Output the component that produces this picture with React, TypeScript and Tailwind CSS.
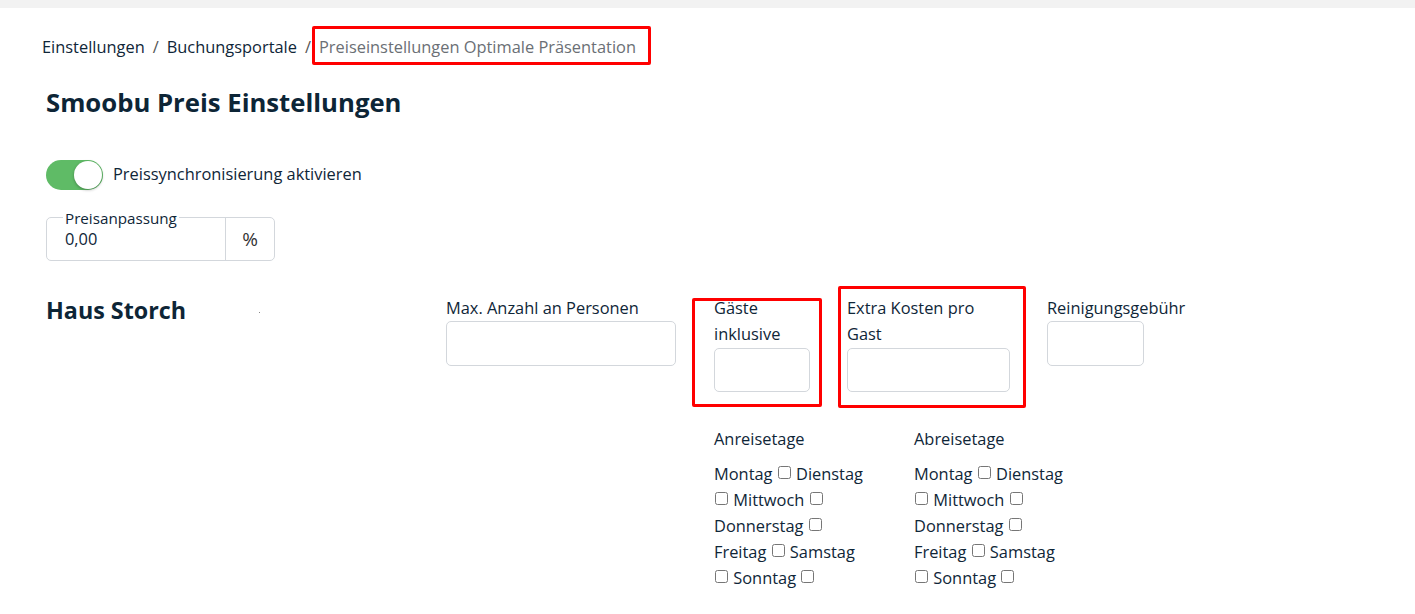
import React from "react";

const font = { fontFamily: "'Open Sans', Arial, sans-serif" };

function DayList() {
  const cb = <input type="checkbox" className="align-middle mx-[1px] relative -top-[3px]" />;
  return (
    <div className="w-[156px] text-[16.4px] leading-[26px]">
      Montag {cb} Dienstag {cb} Mittwoch {cb} Donnerstag {cb} Freitag {cb} Samstag {cb} Sonntag {cb}
    </div>
  );
}

export default function App() {
  return (
    <div className="min-h-[614px] bg-white text-[#0f2638]" style={font}>
      <div className="h-[8px] bg-[#f2f2f2]" />
      <div className="pl-[42px] pt-[27px] text-[16.4px] leading-[24px] flex items-center">
        <span>Einstellungen</span>
        <span className="mx-[8px] text-[#555]">/</span>
        <span>Buchungsportale</span>
        <span className="ml-[8px] mr-[8px] text-[#555]">/</span>
        <span className="relative text-[#6b6f75]">
          Preiseinstellungen Optimale Präsentation
          <span className="absolute -left-[7px] -right-[15px] -top-[9px] -bottom-[6px] border-[3px] border-[#ff0000] rounded-[2px]" />
        </span>
      </div>
      <h1 className="ml-[46px] mt-[28px] text-[25.7px] leading-[32px] font-bold text-[#0d2536]">
        Smoobu Preis Einstellungen
      </h1>
      <div className="ml-[46px] mt-[41px] flex items-center gap-[10px]">
        <div className="w-[57px] h-[30px] rounded-full bg-[#5fbb66] relative">
          <div className="absolute right-[1px] top-[1px] w-[28px] h-[28px] rounded-full bg-white shadow-[0_1px_3px_rgba(0,0,0,0.3)]" />
        </div>
        <span className="text-[16.4px] leading-[24px] -mt-[2px]">Preissynchronisierung aktivieren</span>
      </div>
      <div className="ml-[46px] mt-[27px] w-[229px] h-[44px] border border-[#d3d7dc] rounded-[5px] flex relative">
        <span className="absolute left-[16px] -top-[7px] bg-white px-[2px] text-[15.2px] leading-[15px]">
          Preisanpassung
        </span>
        <div className="w-[179px] border-r border-[#d3d7dc] pl-[18px] pt-[11px] text-[16.4px] leading-[20px]">
          0,00
        </div>
        <div className="flex-1 flex items-center justify-center text-[19px] text-[#333]">%</div>
      </div>
      <div className="mt-[34px] ml-[46px] flex">
        <div className="w-[400px] relative">
          <h2 className="text-[23.3px] leading-[30px] font-bold text-[#0d2536]">Haus Storch</h2>
          <span className="absolute left-[213px] top-[17px] w-[1px] h-[1px] bg-[#888]" />
        </div>
        <div className="flex flex-col">
          <div className="flex items-start gap-[37px] text-[16.4px] leading-[26px]">
            <div className="w-[230px]">
              <div>Max. Anzahl an Personen</div>
              <div className="h-[45px] border border-[#d3d7dc] rounded-[5px]" />
            </div>
            <div className="w-[96px] relative ml-[1px]">
              <div>Gäste inklusive</div>
              <div className="mt-[1px] h-[44px] border border-[#d3d7dc] rounded-[5px]" />
              <span className="absolute -left-[22px] -right-[12px] top-[3px] -bottom-[15px] border-[3px] border-[#ff0000] rounded-[2px]" />
            </div>
            <div className="w-[163px] relative">
              <div>Extra Kosten pro Gast</div>
              <div className="mt-[1px] h-[44px] border border-[#d3d7dc] rounded-[5px]" />
              <span className="absolute -left-[9px] -right-[16px] -top-[9px] -bottom-[16px] border-[3px] border-[#ff0000] rounded-[2px]" />
            </div>
            <div className="w-[97px]">
              <div className="whitespace-nowrap">Reinigungsgebühr</div>
              <div className="h-[45px] border border-[#d3d7dc] rounded-[5px]" />
            </div>
          </div>
          <div className="ml-[268px] mt-[34px] flex gap-[44px]">
            <div>
              <div className="text-[16.4px] leading-[26px] mb-[9px]">Anreisetage</div>
              <DayList />
            </div>
            <div>
              <div className="text-[16.4px] leading-[26px] mb-[9px]">Abreisetage</div>
              <DayList />
            </div>
          </div>
        </div>
      </div>
    </div>
  );
}
